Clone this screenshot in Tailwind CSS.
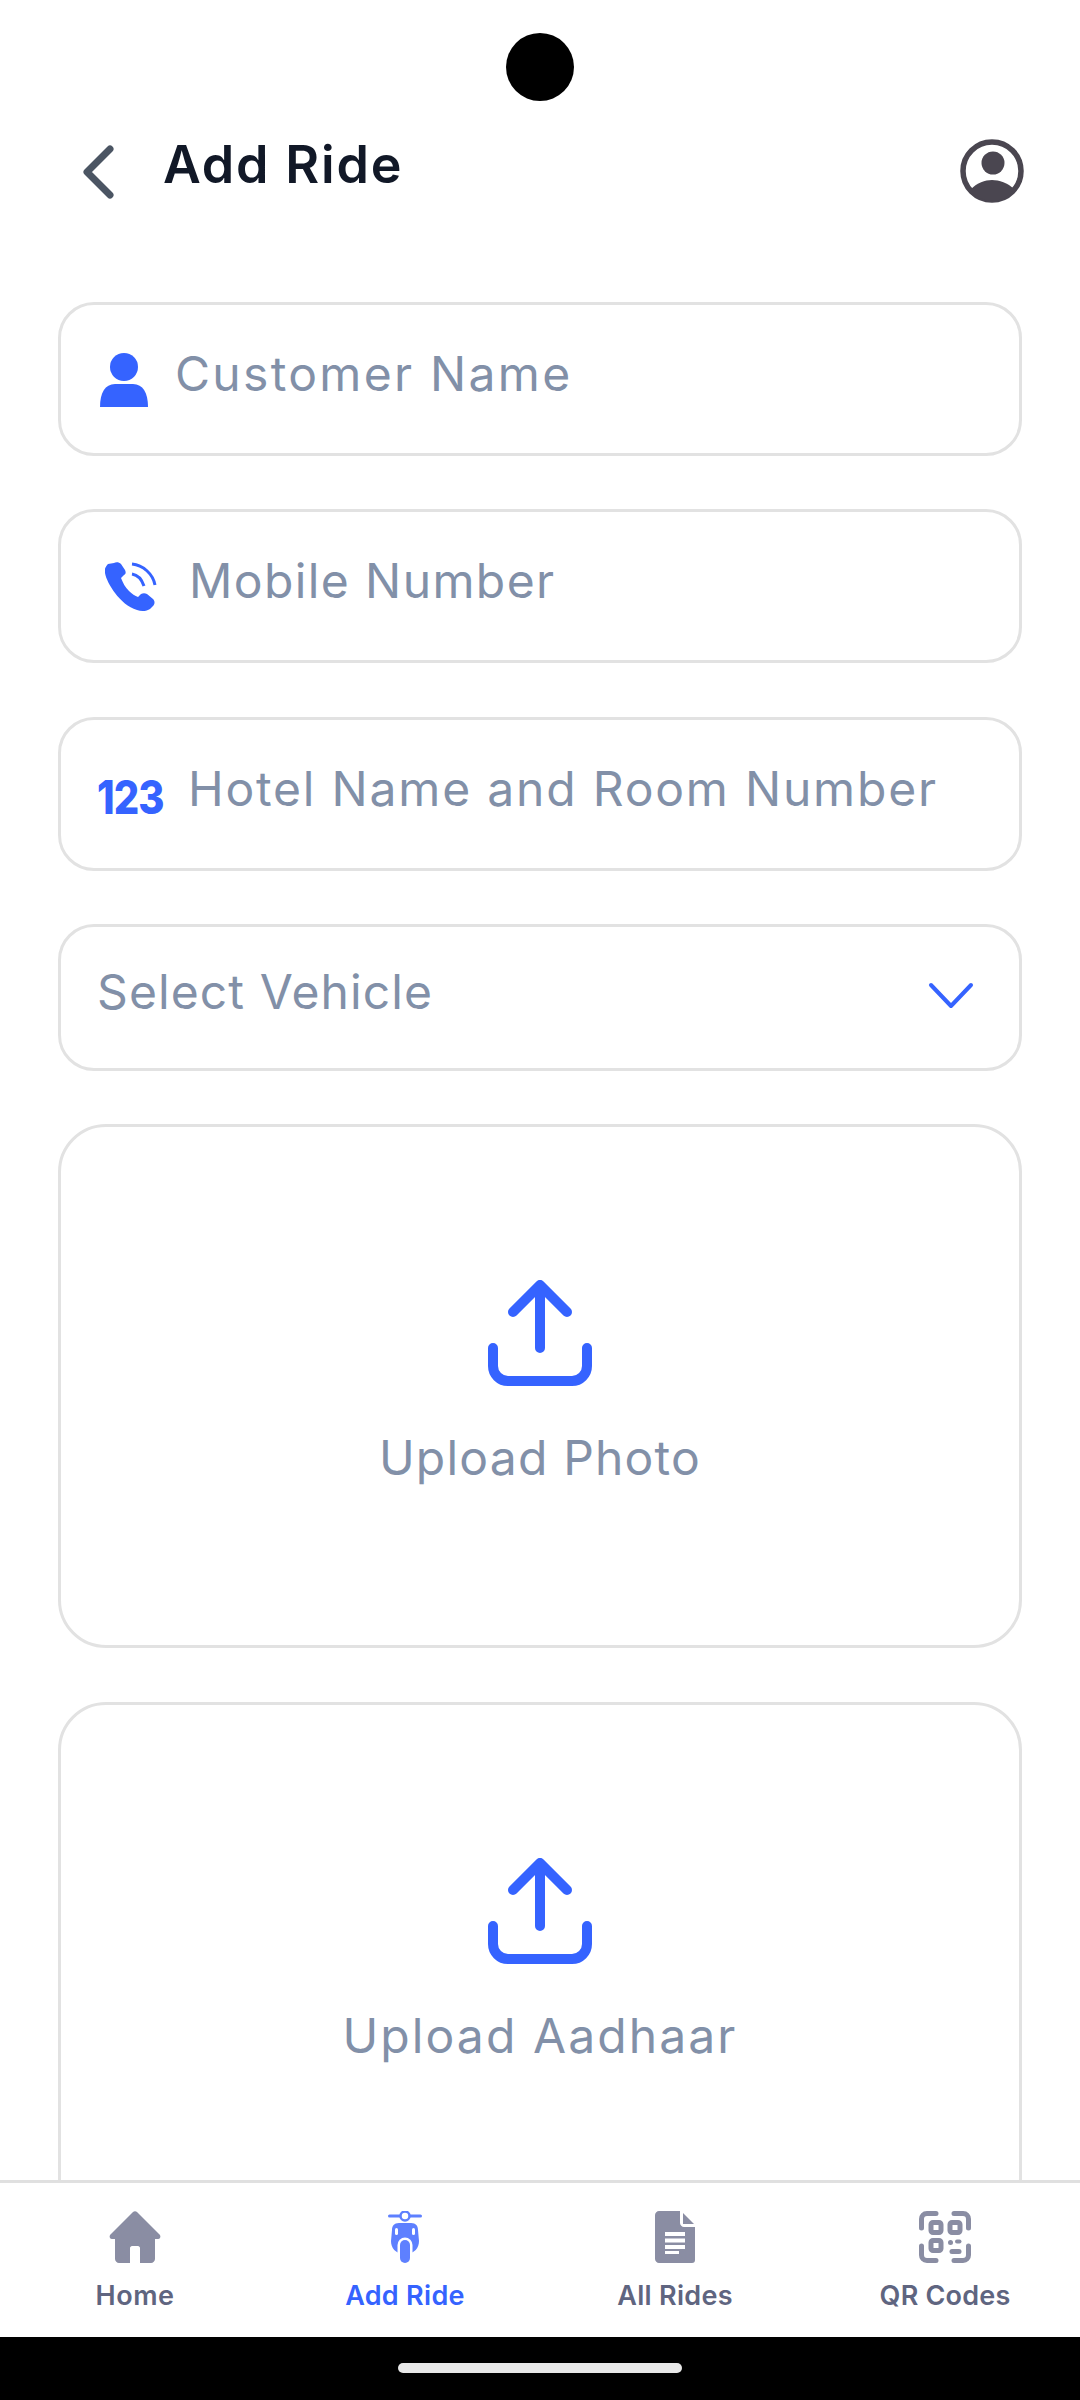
<!DOCTYPE html>
<html lang="en">
<head>
    <meta charset="UTF-8">
    <meta name="viewport" content="width=device-width, initial-scale=1.0">
    <title>Add Ride</title>
    <script src="https://cdn.jsdelivr.net/npm/@tailwindcss/browser@4"></script>
</head>
<body class="bg-white font-['Inter',sans-serif]">
<div class="relative w-[1080px] h-[2400px] flex flex-col overflow-hidden">
    <!-- camera cutout -->
    <div class="absolute left-[506px] top-[33px] w-[68px] h-[68px] rounded-full bg-black"></div>

    <!-- header -->
    <header class="h-[302px] shrink-0 flex items-start pt-[139px] pl-[82px] pr-[56px]">
        <svg class="w-[32px] h-[54px] mt-[6px] shrink-0" viewBox="0 0 32 54" fill="none" stroke="#4b5563" stroke-width="7" stroke-linecap="round" stroke-linejoin="round"><path d="M28 4 5 27l23 23"/></svg>
        <h1 class="ml-[49px] text-[52px] leading-[52px] font-semibold text-[#111827] tracking-[1.8px]">Add Ride</h1>
        <svg class="ml-auto w-[64px] h-[64px]" viewBox="0 0 64 64">
            <circle cx="32" cy="32" r="29" fill="none" stroke="#4a4650" stroke-width="5.5"/>
            <circle cx="33" cy="24" r="11.5" fill="#4a4650"/>
            <path d="M11 50c6-6 14-9 21-9s16 3 22 9c-5 8-13 12-22 12s-16-4-21-12z" fill="#4a4650"/>
        </svg>
    </header>

    <!-- form -->
    <main class="flex-1 min-h-0 overflow-hidden px-[58px] flex flex-col gap-[53.33px]">
        <div class="h-[154px] shrink-0 flex items-start pt-[43px] pl-[39px] border-[3px] border-[#e2e2e2] rounded-[36px] bg-white">
            <svg class="w-[48px] h-[54px] mt-[5px] shrink-0" viewBox="0 0 48 54" fill="#3563ff">
                <ellipse cx="24" cy="14" rx="14" ry="14"/>
                <path d="M0 54c0-14 5-23 15-23h18c10 0 15 9 15 23z"/>
            </svg>
            <span class="ml-[27px] text-[48px] leading-[52px] text-[#8290a8] tracking-[2.3px]">Customer Name</span>
        </div>

        <div class="h-[154px] shrink-0 flex items-start pt-[43px] pl-[44px] border-[3px] border-[#e2e2e2] rounded-[36px] bg-white">
            <svg class="w-[52px] h-[50px] mt-[7px] shrink-0" viewBox="0 0 52 50" fill="#3563ff">
                <path d="M9 1c2-1 5-1 7 1l4 6c1 2 1 4-1 5l-3 3c2 5 4 9 8 13 3 3 6 5 9 6l3-3c2-1 4-1 6 0l6 5c2 2 2 5 0 7l-3 3c-3 2-8 3-13 1-9-3-16-9-22-17C5 24 1 17 0 11c-1-4 1-7 3-9z"/>
                <path d="M27 12c6 1 10 6 12 12M27 2c11 1 21 10 23 21" fill="none" stroke="#3563ff" stroke-width="3"/>
            </svg>
            <span class="ml-[32px] text-[48px] leading-[52px] text-[#8290a8] tracking-[1.4px]">Mobile Number</span>
        </div>

        <div class="h-[154px] shrink-0 flex items-start pt-[43px] pl-[36px] border-[3px] border-[#e2e2e2] rounded-[36px] bg-white">
            <span class="w-[68px] mt-[10px] shrink-0 text-[40px] leading-[50px] font-extrabold text-[#3563ff] tracking-[-1px] scale-y-115">123</span>
            <span class="ml-[23px] text-[48px] leading-[52px] text-[#8290a8] tracking-[1.8px] whitespace-nowrap">Hotel Name and Room Number</span>
        </div>

        <div class="h-[147px] shrink-0 flex items-start pt-[39px] pl-[36px] pr-[45px] border-[3px] border-[#e2e2e2] rounded-[36px] bg-white">
            <span class="text-[48px] leading-[52px] text-[#8290a8] tracking-[1.1px]">Select Vehicle</span>
            <svg class="ml-auto w-[46px] h-[28px] mt-[16px]" viewBox="0 0 46 28" fill="none" stroke="#3563ff" stroke-width="4" stroke-linecap="round" stroke-linejoin="round"><path d="m3 3 20 21L43 3"/></svg>
        </div>

        <div class="h-[524px] shrink-0 flex flex-col items-center pt-[148px] border-[3px] border-[#e2e2e2] rounded-[48px] bg-white">
            <svg class="w-[104px] h-[116px]" viewBox="0 0 104 116" fill="none" stroke="#3563ff" stroke-width="10" stroke-linecap="round" stroke-linejoin="round">
                <path d="M52 10v63M25 37 52 10l27 27M5 73v18a15 15 0 0 0 15 15h64a15 15 0 0 0 15-15V73"/>
            </svg>
            <span class="mt-[41px] text-[48px] leading-[52px] text-[#8290a8] tracking-[1.2px]">Upload Photo</span>
        </div>

        <div class="h-[524px] shrink-0 flex flex-col items-center pt-[148px] border-[3px] border-[#e2e2e2] rounded-[48px] bg-white">
            <svg class="w-[104px] h-[116px]" viewBox="0 0 104 116" fill="none" stroke="#3563ff" stroke-width="10" stroke-linecap="round" stroke-linejoin="round">
                <path d="M52 10v63M25 37 52 10l27 27M5 73v18a15 15 0 0 0 15 15h64a15 15 0 0 0 15-15V73"/>
            </svg>
            <span class="mt-[41px] text-[48px] leading-[52px] text-[#8290a8] tracking-[2.1px]">Upload Aadhaar</span>
        </div>
    </main>

    <!-- bottom nav -->
    <nav class="h-[157px] shrink-0 grid grid-cols-4 border-t-[3px] border-[#e0e0e0] bg-white pt-[28px]">
        <div class="flex flex-col items-center">
            <svg class="w-[52px] h-[52px]" viewBox="0 0 52 52" fill="#8a8da3">
                <path d="M24 1c1-1 3-1 4 0l23 23c1 2 0 4-2 4h-3v20c0 2-2 4-4 4H31V37c0-1-1-2-2-2h-6c-1 0-2 1-2 2v15H10c-2 0-4-2-4-4V28H3c-2 0-3-2-2-4z"/>
            </svg>
            <span class="mt-[18px] text-[27px] leading-[30px] font-semibold text-[#5f6580] tracking-[0.5px]">Home</span>
        </div>
        <div class="flex flex-col items-center">
            <svg class="w-[34px] h-[52px]" viewBox="0 0 34 52" fill="#5e80ff">
                <rect x="0" y="3.5" width="34" height="3" rx="1.5"/>
                <circle cx="17" cy="5" r="4.5" fill="#fff" stroke="#5e80ff" stroke-width="2.5"/>
                <path d="M11 12h12c5 0 7 3 7 7l1 11c0 7-4 12-14 14C7 42 3 37 3 30l1-11c0-4 2-7 7-7z"/>
                <rect x="9.5" y="26.5" width="15" height="28" rx="7.5" fill="#fff"/>
                <rect x="12" y="29" width="10" height="23" rx="5"/>
                <rect x="7" y="17" width="3" height="7" rx="1.5" fill="#fff"/>
                <rect x="24" y="17" width="3" height="7" rx="1.5" fill="#fff"/>
            </svg>
            <span class="mt-[18px] text-[27px] leading-[30px] font-semibold text-[#3563ff] tracking-[0.3px]">Add Ride</span>
        </div>
        <div class="flex flex-col items-center">
            <svg class="w-[40px] h-[52px]" viewBox="0 0 40 52" fill="#8a8da3">
                <path d="M4 0h21v12c0 2 2 4 4 4h11v33c0 2-1 3-3 3H4c-2 0-4-2-4-4V4c0-2 2-4 4-4z"/>
                <path d="M28 2l11 11H28z"/>
                <path d="M10 21h20v4H10zM10 27.500h20v4H10zM10 34h20v4H10zM10 40h14v3H10z" fill="#fff"/>
            </svg>
            <span class="mt-[18px] text-[27px] leading-[30px] font-semibold text-[#5f6580] tracking-[0.3px]">All Rides</span>
        </div>
        <div class="flex flex-col items-center">
            <svg class="w-[52px] h-[52px]" viewBox="0 0 52 52">
                <g fill="none" stroke="#8a8da3" stroke-width="5" stroke-linecap="round">
                    <path d="M2.500 17V8c0-3 2-5.500 5.500-5.500h9M35 2.500h9c3.500 0 5.500 2.500 5.500 5.500v9M2.500 35v9c0 3 2 5.500 5.500 5.500h9M49.500 35v9c0 3-2 5.500-5.500 5.500h-9"/>
                    <rect x="12" y="11.500" width="10" height="10" rx="2"/>
                    <rect x="31" y="11.500" width="10" height="10" rx="2"/>
                    <rect x="12" y="29.500" width="10" height="10" rx="2"/>
                    <path d="M33 40.500h7"/>
                </g>
                <rect x="29" y="29" width="5" height="5" rx="2.500" fill="#8a8da3"/>
                <rect x="36" y="28.500" width="6.500" height="4" rx="2" fill="#8a8da3"/>
            </svg>
            <span class="mt-[18px] text-[27px] leading-[30px] font-semibold text-[#5f6580] tracking-[0.2px]">QR Codes</span>
        </div>
    </nav>

    <!-- system gesture bar -->
    <div class="h-[63px] shrink-0 bg-black flex justify-center pt-[26px]">
        <div class="w-[284px] h-[10px] rounded-full bg-[#e8e8e8]"></div>
    </div>
</div>
</body>
</html>
